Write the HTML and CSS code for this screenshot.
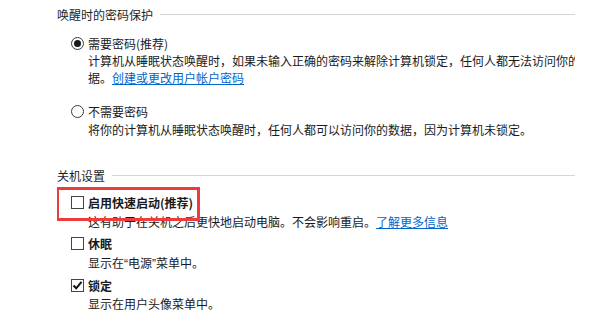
FILE: index.html
```html
<!DOCTYPE html>
<html lang="zh-CN">
<head>
<meta charset="utf-8">
<link rel="stylesheet" href="styles.css">
</head>
<body>
<div class="panel">
  <div class="group-title first">唤醒时的密码保护</div>
  <div class="options">
    <div class="option opt-1">
      <div class="row"><span class="radio checked"></span><span class="label">需要密码(推荐)</span></div>
      <div class="desc">计算机从睡眠状态唤醒时，如果未输入正确的密码来解除计算机锁定，任何人都无法访问你的数<br>据。<a class="link" href="#">创建或更改用户帐户密码</a></div>
    </div>
    <div class="option opt-2">
      <div class="row"><span class="radio"></span><span class="label">不需要密码</span></div>
      <div class="desc">将你的计算机从睡眠状态唤醒时，任何人都可以访问你的数据，因为计算机未锁定。</div>
    </div>
  </div>

  <div class="group-title second">关机设置</div>
  <div class="options">
    <div class="option opt-fast">
      <div class="row"><span class="check"></span><span class="label bold">启用快速启动(推荐)</span></div>
      <div class="desc">这有助于在关机之后更快地启动电脑。不会影响重启。<a class="link" href="#">了解更多信息</a></div>
    </div>
    <div class="option opt-sleep">
      <div class="row"><span class="check"></span><span class="label bold">休眠</span></div>
      <div class="desc">显示在<span class="quote">“</span>电源<span class="quote">”</span>菜单中。</div>
    </div>
    <div class="option opt-lock">
      <div class="row"><span class="check checked"><svg width="11" height="11" viewBox="0 0 11 11"><path d="M1.5 5.5 L4.2 8.3 L9.5 1.8" fill="none" stroke="#111" stroke-width="2"/></svg></span><span class="label bold">锁定</span></div>
      <div class="desc">显示在用户头像菜单中。</div>
    </div>
  </div>
  <div class="highlight"></div>
</div>
</body>
</html>
```

FILE: styles.css
```css
* { box-sizing: border-box; }
html, body { margin: 0; padding: 0; background: #fff; }
body {
  width: 600px;
  height: 330px;
  overflow: hidden;
  font-family: "Noto Sans CJK SC", "Microsoft YaHei", sans-serif;
  font-size: 12px;
  color: #1a1a1a;
}
.panel {
  position: relative;
  margin-left: 57px;
  width: 518px;
  height: 330px;
  overflow: hidden;
}
.group-title {
  display: flex;
  align-items: center;
  line-height: 17px;
  height: 17px;
  color: #1e1e1e;
}
.group-title::after {
  content: "";
  flex: 1;
  height: 1px;
  background: #d5d5d5;
  margin-left: 7px;
}
.group-title.first { margin-top: 6px; }
.group-title.second { margin-top: 29px; }
.options { padding-left: 14px; }
.row {
  display: flex;
  align-items: center;
  height: 17px;
  line-height: 17px;
}
.label { margin-left: 4px; }
.bold { font-weight: bold; }
.desc {
  padding-left: 17px;
  line-height: 17px;
  white-space: nowrap;
}
.quote { font-family: "Liberation Sans", sans-serif; }
.radio {
  width: 13px;
  height: 13px;
  border: 1px solid #3c3c3c;
  border-radius: 50%;
  display: flex;
  align-items: center;
  justify-content: center;
  flex: none;
}
.radio.checked::before {
  content: "";
  width: 7px;
  height: 7px;
  border-radius: 50%;
  background: #1a1a1a;
}
.check {
  width: 13px;
  height: 13px;
  border: 1px solid #444;
  display: flex;
  align-items: center;
  justify-content: center;
  flex: none;
}
.link { color: #0066cc; text-decoration: underline; }
.opt-1 { margin-top: 12px; }
.opt-2 { margin-top: 17px; }
.opt-2 .desc { margin-top: 1px; }
.opt-fast { margin-top: 10px; }
.opt-fast .desc { margin-top: 2px; }
.opt-sleep { margin-top: 5px; }
.opt-sleep .desc { margin-top: 2px; }
.opt-lock { margin-top: 4px; }
.opt-lock .desc { margin-top: 1px; }
.highlight {
  position: absolute;
  left: -1px;
  top: 187px;
  width: 144px;
  height: 34px;
  border: 3px solid #ee3b3b;
}
```
